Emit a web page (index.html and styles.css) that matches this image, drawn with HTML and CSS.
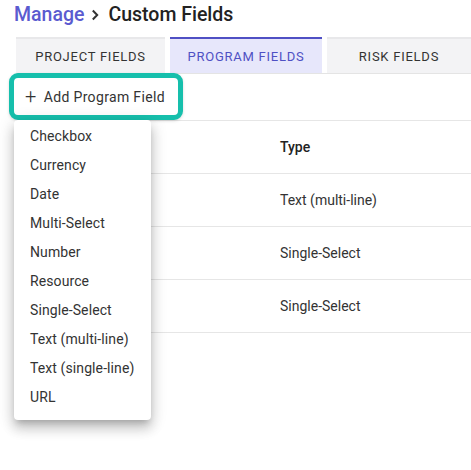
FILE: index.html
```html
<!DOCTYPE html>
<html>
<head>
<meta charset="utf-8">
<link rel="stylesheet" href="styles.css">
</head>
<body>
<div class="page">
  <h1 class="crumbs"><span class="crumb-link">Manage</span><svg class="crumb-sep" width="8" height="12" viewBox="0 0 8 12"><path d="M1.8 1.5 L6.2 6 L1.8 10.5" fill="none" stroke="#333" stroke-width="2"/></svg><span class="crumb-cur">Custom Fields</span></h1>
  <div class="tabs">
    <div class="tab">Project Fields</div>
    <div class="tab active">Program Fields</div>
    <div class="tab">Risk Fields</div>
  </div>
  <div class="toolbar">
    <div class="add-wrap">
      <button class="add-btn"><span class="plus">+</span>Add Program Field</button>
      <ul class="menu">
        <li>Checkbox</li>
        <li>Currency</li>
        <li>Date</li>
        <li>Multi-Select</li>
        <li>Number</li>
        <li>Resource</li>
        <li>Single-Select</li>
        <li>Text (multi-line)</li>
        <li>Text (single-line)</li>
        <li>URL</li>
      </ul>
    </div>
  </div>
  <div class="table">
    <div class="row head"><div class="c1"></div><div class="c2">Type</div></div>
    <div class="row"><div class="c1"></div><div class="c2">Text (multi-line)</div></div>
    <div class="row"><div class="c1"></div><div class="c2">Single-Select</div></div>
    <div class="row"><div class="c1"></div><div class="c2">Single-Select</div></div>
  </div>
</div>
</body>
</html>
```
FILE: styles.css
```css
* { box-sizing: border-box; }
html, body { margin: 0; padding: 0; background: #fff; }
body { font-family: Roboto, "Noto Sans", sans-serif; color: #333; width: 471px; height: 470px; overflow: hidden; }
.page { padding-top: 2px; }
.crumbs { margin: 0 0 9px 14px; height: 26px; font-size: 19.5px; font-weight: 500; line-height: 26px; display: flex; align-items: center; }
.crumb-link { color: #5b5bd0; }
.crumb-sep { margin: 0 9px 0 7px; flex: none; }
.crumb-cur { color: #222; }
.tabs { display: flex; gap: 5px; margin-left: 16px; border-bottom: 1px solid #e4e4e4; }
.tab { height: 36px; background: #f3f3f5; border-top: 2px solid #e8e8ea; display: flex; align-items: center; justify-content: center; text-transform: uppercase; font-size: 13px; letter-spacing: 0.75px; color: #333; }
.tab:nth-child(1) { width: 149px; }
.tab:nth-child(2) { width: 152px; }
.tab:nth-child(3) { flex: 1; }
.tab.active { background: #e7e7fb; border-top-color: #4f50c4; color: #4f50c4; }
.toolbar { height: 46px; position: relative; }
.add-wrap { position: absolute; left: 9px; top: -1px; }
.add-btn { display: flex; align-items: center; height: 47px; width: 174px; border: 5px solid #16bfac; border-radius: 9px; background: #fff; box-shadow: 0 1px 3px rgba(0,0,0,0.15); font-family: Roboto, sans-serif; font-size: 14px; color: #333; padding: 0 0 0 11px; letter-spacing: 0.35px; }
.plus { font-size: 20px; font-weight: 300; margin-right: 7px; line-height: 1; position: relative; top: -1px; }
.menu { position: absolute; left: 5px; top: 47px; width: 137px; margin: 0; padding: 2px 0 8px; list-style: none; background: #fff; border-radius: 4px; box-shadow: 0 5px 6px -3px rgba(0,0,0,0.2), 0 9px 12px 1px rgba(0,0,0,0.14), 0 3px 16px 2px rgba(0,0,0,0.12); z-index: 5; }
.menu li { height: 29px; line-height: 29px; padding-left: 16px; font-size: 14px; color: #333; letter-spacing: 0.1px; }
.table { margin-left: 16px; border-top: 1px solid #e6e6e6; }
.row { display: flex; height: 53px; align-items: center; border-bottom: 1px solid #e6e6e6; font-size: 14px; }
.row.head { font-weight: 500; color: #222; }
.c1 { width: 248px; padding-left: 16px; }
.c2 { flex: 1; padding-left: 16px; }
```
